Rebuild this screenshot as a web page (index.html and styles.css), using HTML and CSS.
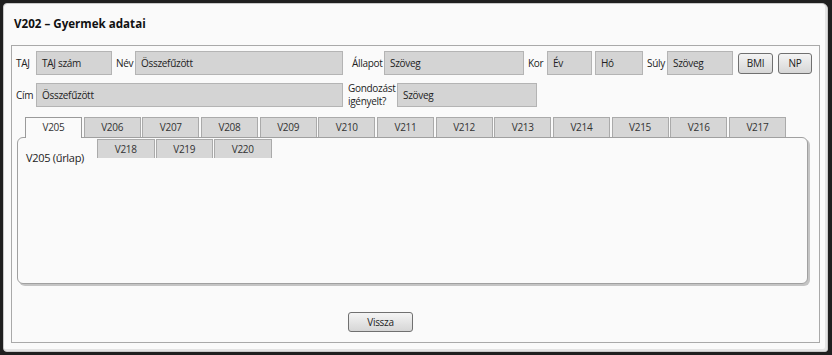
FILE: index.html
```html
<!DOCTYPE html>
<html lang="hu">
<head>
<meta charset="utf-8">
<title>V202 – Gyermek adatai</title>
<link rel="stylesheet" href="styles.css">
</head>
<body>
<div class="window">
  <div class="title">V202 – Gyermek adatai</div>
  <div class="panel">
    <div class="row">
      <span class="lbl w-taj">TAJ</span>
      <span class="field f-taj">TAJ szám</span>
      <span class="lbl w-nev">Név</span>
      <span class="field f-nev">Összefűzött</span>
      <span class="lbl w-allapot">Állapot</span>
      <span class="field f-allapot">Szöveg</span>
      <span class="lbl w-kor">Kor</span>
      <span class="field f-ev">Év</span>
      <span class="field f-ho">Hó</span>
      <span class="lbl w-suly">Súly</span>
      <span class="field f-suly">Szöveg</span>
      <button class="btn btn-bmi">BMI</button>
      <button class="btn btn-np">NP</button>
    </div>
    <div class="row row2">
      <span class="lbl w-cim">Cím</span>
      <span class="field f-cim">Összefűzött</span>
      <span class="lbl lbl-two w-gond">Gondozást<br>igényelt?</span>
      <span class="field f-gond">Szöveg</span>
    </div>
    <div class="tabs">
      <div class="tab active">V205</div>
      <div class="tab">V206</div>
      <div class="tab">V207</div>
      <div class="tab">V208</div>
      <div class="tab">V209</div>
      <div class="tab">V210</div>
      <div class="tab">V211</div>
      <div class="tab">V212</div>
      <div class="tab">V213</div>
      <div class="tab">V214</div>
      <div class="tab">V215</div>
      <div class="tab">V216</div>
      <div class="tab">V217</div>
    </div>
    <div class="tabpanel">
      <div class="form-label">V205 (űrlap)</div>
      <div class="tabs tabs2">
        <div class="tab">V218</div>
        <div class="tab">V219</div>
        <div class="tab">V220</div>
      </div>
    </div>
    <div class="footer">
      <button class="btn btn-back">Vissza</button>
    </div>
  </div>
</div>
</body>
</html>
```
FILE: styles.css
```css
html, body {
  margin: 0;
  padding: 0;
}
body {
  background: #1f1f1f;
  width: 832px;
  height: 355px;
  overflow: hidden;
  font-family: "Open Sans", "Noto Sans", sans-serif;
  font-size: 10px;
  letter-spacing: -0.3px;
  color: #222;
}
.window {
  box-sizing: border-box;
  margin: 3px 4px 0 3px;
  width: 825px;
  height: 349px;
  background: #fafafa;
  border: 1px solid #c8c8c8;
  border-radius: 4px 6px 3px 4px;
  box-shadow: inset -2px -2px 0 #e4e4e4;
  padding: 0 0 0 7px;
}
.title {
  height: 41px;
  line-height: 39px;
  font-weight: bold;
  font-size: 11.6px;
  letter-spacing: 0;
  padding-left: 3px;
  color: #111;
}
.panel {
  box-sizing: border-box;
  width: 809px;
  height: 298px;
  border: 1px solid #a9a9a9;
  padding-top: 5px;
}
.row {
  display: flex;
  align-items: center;
  height: 24px;
}
.row2 {
  margin-top: 8px;
}
.lbl {
  box-sizing: border-box;
  padding-left: 4px;
  white-space: nowrap;
}
.lbl-two {
  line-height: 13px;
}
.w-taj { width: 24px; }
.w-nev { width: 23px; }
.w-allapot { width: 41px; padding-left: 9px; }
.w-kor { width: 23px; }
.w-suly { width: 24px; }
.w-cim { width: 24px; }
.w-gond { width: 54px; padding-left: 5px; }
.field {
  box-sizing: border-box;
  height: 24px;
  line-height: 22px;
  background: #d4d4d4;
  border: 1px solid #b4b4b4;
  padding-left: 5px;
  white-space: nowrap;
}
.f-taj { width: 76px; }
.f-nev { width: 208px; }
.f-allapot { width: 140px; }
.f-ev { width: 45px; }
.f-ho { width: 48px; margin-left: 3px; }
.f-suly { width: 66px; }
.f-cim { width: 307px; }
.f-gond { width: 140px; }
.btn {
  box-sizing: border-box;
  font-family: inherit;
  font-size: 10px;
  letter-spacing: -0.3px;
  color: #222;
  background: linear-gradient(#f4f4f4, #d6d6d6);
  border: 1px solid #707070;
  border-radius: 3px;
  padding: 0;
}
.btn-bmi { width: 35px; height: 21px; margin-left: 5px; }
.btn-np { width: 34px; height: 21px; margin-left: 5px; }
.tabs {
  display: flex;
  gap: 1.67px;
  margin: 10px 0 0 13px;
}
.tab {
  box-sizing: border-box;
  width: 57px;
  height: 20px;
  line-height: 18px;
  text-align: center;
  background: #d6d6d6;
  border: 1px solid #aaa;
  border-bottom: none;
  color: #333;
}
.tab.active {
  background: #fafafa;
  border-color: #9a9a9a;
  height: 21px;
  position: relative;
  z-index: 2;
}
.tabpanel {
  box-sizing: border-box;
  display: flex;
  align-items: flex-start;
  width: 791px;
  height: 147px;
  margin: -1px 0 0 5px;
  background: #fafafa;
  border: 1px solid #a0a0a0;
  border-radius: 6px;
  box-shadow: 2px 2px 0 #c4c4c4;
  position: relative;
  z-index: 1;
}
.form-label {
  margin: 12px 0 0 8px;
  font-size: 11px;
  width: 70px;
  color: #222;
}
.tabs2 {
  margin: 1px 0 0 1px;
  gap: 1px;
}
.tabs2 .tab {
  height: 19px;
  width: 57.5px;
}
.footer {
  margin: 28px 0 0 336px;
}
.btn-back {
  width: 65px;
  height: 20px;
  font-size: 10px;
}
```
